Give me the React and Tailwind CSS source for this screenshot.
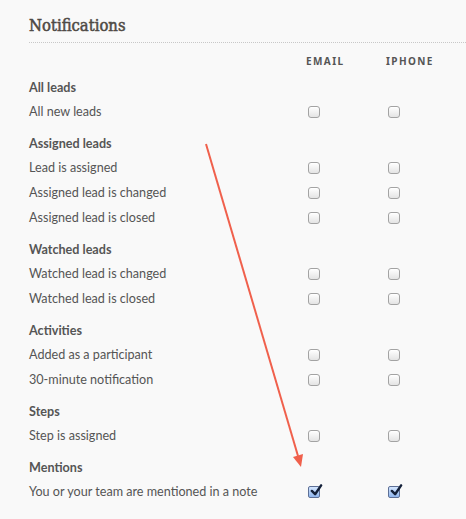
import React from 'react';

const sections = [
  { title: 'All leads', items: [{ label: 'All new leads' }] },
  {
    title: 'Assigned leads',
    items: [
      { label: 'Lead is assigned' },
      { label: 'Assigned lead is changed' },
      { label: 'Assigned lead is closed' },
    ],
  },
  {
    title: 'Watched leads',
    items: [{ label: 'Watched lead is changed' }, { label: 'Watched lead is closed' }],
  },
  {
    title: 'Activities',
    items: [{ label: 'Added as a participant' }, { label: '30-minute notification' }],
  },
  { title: 'Steps', items: [{ label: 'Step is assigned' }] },
  {
    title: 'Mentions',
    items: [{ label: 'You or your team are mentioned in a note', checked: true }],
  },
];

const Box = ({ checked }) =>
  checked ? (
    <span className="relative ml-[2px] block h-[12px] w-[12px] rounded-[2px] border border-[#5d6f96] bg-gradient-to-b from-[#d4e6ff] to-[#8fb5ec]">
      <svg viewBox="0 0 14 14" className="absolute -top-[3px] left-[1px] h-[13px] w-[13px]">
        <path d="M2 7.5 L5.5 11 L12 1.5" fill="none" stroke="#14213a" strokeWidth="2.6" strokeLinecap="round" strokeLinejoin="round" />
      </svg>
    </span>
  ) : (
    <span className="ml-[2px] block h-[12px] w-[12px] rounded-[3px] border border-[#a3a3a3] bg-gradient-to-b from-white to-[#e4e4e4] shadow-[inset_0_1px_0_#fff]" />
  );

export default function App() {
  return (
    <div className="relative h-[519px] w-[466px] overflow-hidden bg-[#f9f9f9] font-['Lato',sans-serif] text-[12.6px] text-[#555]">
      <div className="pl-[29px] pt-[13px]">
        <div className="h-[30px] border-b border-dotted border-[#c8c8c8]">
          <h2 className="h-[24px] font-['DejaVu_Serif_Condensed','DejaVu_Serif',serif] text-[16.5px] font-normal leading-[26px] text-[#4f4a45] [-webkit-text-stroke:0.5px_#4f4a45]">
            Notifications
          </h2>
        </div>

        <div className="mt-[8px] flex h-[20px] items-center font-['Noto_Sans',sans-serif] text-[10px] font-bold tracking-[1.4px] text-[#555]">
          <div className="flex-1" />
          <div className="w-[80px]">EMAIL</div>
          <div className="w-[80px]">IPHONE</div>
        </div>

        <div className="mt-[6px]">
          {sections.map((s, i) => (
            <div key={s.title} className={i === 0 ? '' : 'mt-[9px]'}>
              <div className="flex h-[22px] items-center font-bold text-[#555]">{s.title}</div>
              {s.items.map((it) => (
                <div key={it.label} className="flex h-[25px] items-center">
                  <div className="flex-1 pt-[2px]">{it.label}</div>
                  <div className="w-[80px]">
                    <Box checked={it.checked} />
                  </div>
                  <div className="w-[80px]">
                    <Box checked={it.checked} />
                  </div>
                </div>
              ))}
            </div>
          ))}
        </div>
      </div>

      <svg className="pointer-events-none absolute left-0 top-0" width="466" height="519">
        <line x1="206" y1="144" x2="298" y2="456" stroke="#f0604c" strokeWidth="2" />
        <polygon points="301,467 303,454 293,457" fill="#f0604c" />
      </svg>
    </div>
  );
}
